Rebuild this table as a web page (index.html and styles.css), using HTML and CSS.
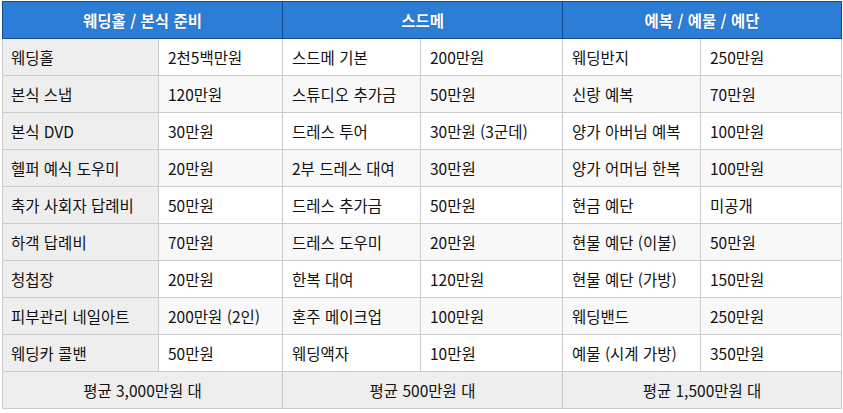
FILE: index.html
```html
<!DOCTYPE html>
<html lang="ko">
<head>
<meta charset="utf-8">
<title>결혼 비용</title>
<link rel="stylesheet" href="styles.css">
</head>
<body>
<table class="cost">
  <colgroup>
    <col class="c1"><col class="c2"><col class="c3"><col class="c4"><col class="c5"><col class="c6">
  </colgroup>
  <thead>
    <tr>
      <th colspan="2">웨딩홀 / 본식 준비</th>
      <th colspan="2">스드메</th>
      <th colspan="2">예복 / 예물 / 예단</th>
    </tr>
  </thead>
  <tbody>
    <tr><td class="lab">웨딩홀</td><td>2천5백만원</td><td>스드메 기본</td><td>200만원</td><td>웨딩반지</td><td>250만원</td></tr>
    <tr><td class="lab">본식 스냅</td><td>120만원</td><td>스튜디오 추가금</td><td>50만원</td><td>신랑 예복</td><td>70만원</td></tr>
    <tr><td class="lab">본식 DVD</td><td>30만원</td><td>드레스 투어</td><td>30만원 (3군데)</td><td>양가 아버님 예복</td><td>100만원</td></tr>
    <tr><td class="lab">헬퍼 예식 도우미</td><td>20만원</td><td>2부 드레스 대여</td><td>30만원</td><td>양가 어머님 한복</td><td>100만원</td></tr>
    <tr><td class="lab">축가 사회자 답례비</td><td>50만원</td><td>드레스 추가금</td><td>50만원</td><td>현금 예단</td><td>미공개</td></tr>
    <tr><td class="lab">하객 답례비</td><td>70만원</td><td>드레스 도우미</td><td>20만원</td><td>현물 예단 (이불)</td><td>50만원</td></tr>
    <tr><td class="lab">청첩장</td><td>20만원</td><td>한복 대여</td><td>120만원</td><td>현물 예단 (가방)</td><td>150만원</td></tr>
    <tr><td class="lab">피부관리 네일아트</td><td>200만원 (2인)</td><td>혼주 메이크업</td><td>100만원</td><td>웨딩밴드</td><td>250만원</td></tr>
    <tr><td class="lab">웨딩카 콜밴</td><td>50만원</td><td>웨딩액자</td><td>10만원</td><td>예물 (시계 가방)</td><td>350만원</td></tr>
  </tbody>
  <tfoot>
    <tr>
      <td colspan="2">평균 3,000만원 대</td>
      <td colspan="2">평균 500만원 대</td>
      <td colspan="2">평균 1,500만원 대</td>
    </tr>
  </tfoot>
</table>
</body>
</html>
```

FILE: styles.css
```css
html, body {
  margin: 0;
  padding: 0;
  background: #ffffff;
}
body {
  padding: 1px 2px;
  font-family: "Noto Sans CJK KR", "Noto Sans", sans-serif;
  color: #111111;
}
.cost {
  border-collapse: collapse;
  table-layout: fixed;
  width: 839px;
  font-size: 15.5px;
}
.c1 { width: 156px; }
.c2 { width: 124px; }
.c3 { width: 138px; }
.c4 { width: 142px; }
.c5 { width: 138px; }
.c6 { width: 141px; }
.cost th {
  height: 36px;
  padding: 0;
  background: #2b7dd5;
  color: #ffffff;
  font-weight: bold;
  font-size: 15.5px;
  border: 1px solid #0f4a8e;
  text-align: center;
  vertical-align: middle;
  text-shadow: 0 0 1px rgba(0, 40, 100, 0.5);
}
.cost td {
  height: 36px;
  padding: 0 0 0 9px;
  border: 1px solid #cccccc;
  vertical-align: middle;
  line-height: 20px;
  white-space: nowrap;
}
.cost tbody tr:nth-child(even) td {
  background: #f8f8f8;
}
.cost tbody td.lab,
.cost tbody tr:nth-child(even) td.lab {
  background: #eeeeee;
  padding-left: 8px;
}
.cost tfoot td {
  background: #eeeeee;
  text-align: center;
  padding: 0;
}
```
